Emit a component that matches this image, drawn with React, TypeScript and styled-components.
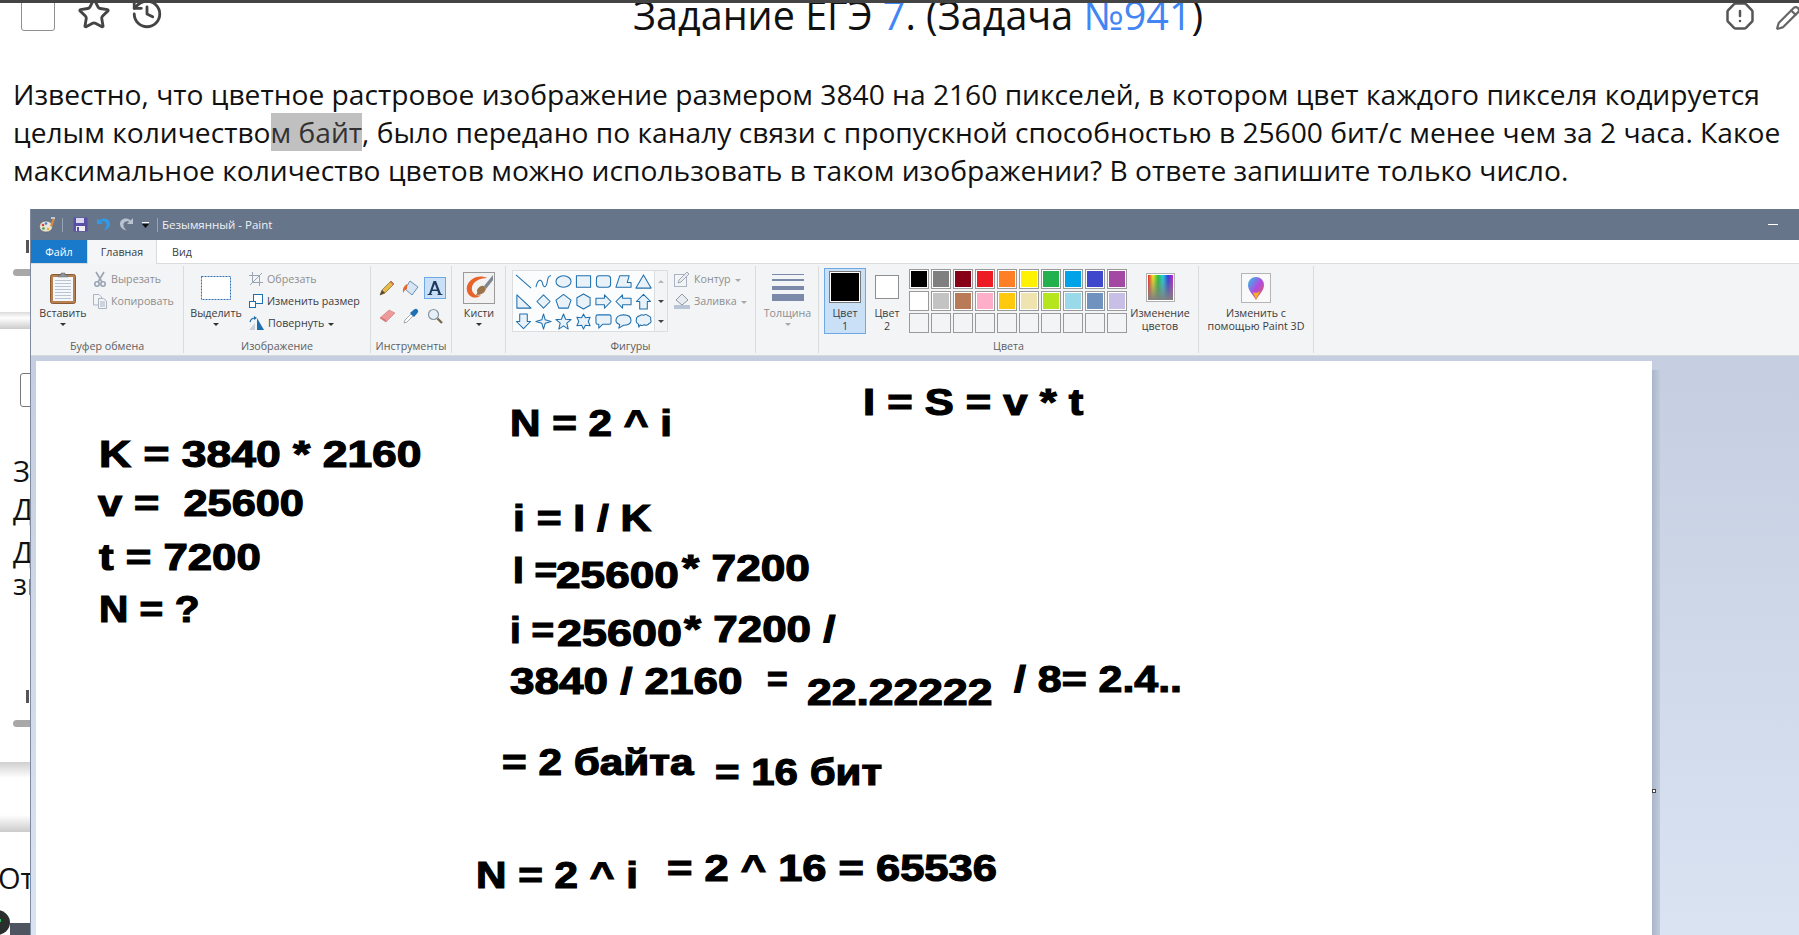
import { useLayoutEffect, useRef, type ReactNode } from 'react';
import { History, OctagonAlert, Pencil, Star } from 'lucide-react';
import styled, { createGlobalStyle } from 'styled-components';

const GlobalStyle = createGlobalStyle`
	html, body {
		margin: 0;
		padding: 0;
		background: #fff;
		overflow: hidden;
	}
`;

const Page = styled.div`
	position: relative;
	width: 1799px;
	height: 935px;
	overflow: hidden;
	background: #fff;
	font-family: 'Open Sans', 'Noto Sans', sans-serif;
	color: #111;
`;

const TopLine = styled.div`
	height: 3px;
	background: #444;
`;

const Header = styled.header`
	height: 33px;
	position: relative;
	display: flex;
	justify-content: space-between;
	align-items: flex-end;
	overflow: hidden;
	padding: 0 0 5px 21px;
	box-sizing: border-box;
`;

const HeaderIcons = styled.div`
	display: flex;
	align-items: flex-end;
	gap: 22px;
	svg + svg {
		margin-left: -3px;
	}
`;

const Checkbox = styled.div`
	width: 34px;
	height: 34px;
	margin-top: -8px;
	border: 1px solid #8f8f8f;
	border-radius: 3px;
	box-sizing: border-box;
`;

const Title = styled.h1`
	position: absolute;
	left: 633px;
	top: -13px;
	margin: 0;
	font-size: 39.5px;
	font-weight: 400;
	line-height: 50px;
	white-space: nowrap;
	color: #111;
	a {
		color: #4285f4;
	}
`;

const HeaderRight = styled.div`
	display: flex;
	align-items: flex-end;
	gap: 20px;
	margin-right: -2px;
`;

const Task = styled.p`
	margin: 39px 0 0;
	padding: 0 13px;
	width: 1775px;
	font-size: 28.18px;
	line-height: 38px;
	color: #111;
	mark {
		background: #c0c0c0;
		color: #333;
	}
`;

const Behind = styled.div`
	position: absolute;
	left: 0;
	top: 209px;
	width: 30px;
	height: 726px;
	overflow: hidden;
	display: flex;
	flex-direction: column;
`;

const Tick = styled.div<{ $mt: number }>`
	width: 3px;
	height: 13px;
	margin: ${(p) => p.$mt}px 0 0 26px;
	background: #555;
	flex: none;
`;

const SliderBar = styled.div<{ $mt: number }>`
	height: 7px;
	margin: ${(p) => p.$mt}px 0 0 13px;
	width: 30px;
	background: #a8a8a8;
	border-radius: 4px;
	flex: none;
`;

const Band = styled.div<{ $mt: number; $h: number; $fill: string }>`
	height: ${(p) => p.$h}px;
	margin-top: ${(p) => p.$mt}px;
	background: ${(p) => p.$fill};
	flex: none;
`;

const GhostBox = styled.div<{ $mt: number }>`
	width: 30px;
	height: 34px;
	margin: ${(p) => p.$mt}px 0 0 20px;
	border: 1px solid #777;
	border-radius: 3px;
	box-sizing: border-box;
	flex: none;
`;

const BehindLine = styled.div<{ $mt?: number; $ml: number }>`
	margin: ${(p) => p.$mt ?? 0}px 0 0 ${(p) => p.$ml}px;
	font-size: 29px;
	line-height: 38px;
	height: 38px;
	white-space: nowrap;
	flex: none;
`;

const FootRow = styled.div`
	margin-top: 10px;
	height: 28px;
	display: flex;
	align-items: flex-end;
	flex: none;
`;

const FootDot = styled.div`
	position: relative;
	width: 26px;
	height: 25px;
	margin-left: -16px;
	border-radius: 50%;
	background: #2a2f2d;
	flex: none;
	&::after {
		content: '';
		position: absolute;
		left: 16px;
		top: 9px;
		width: 1px;
		height: 3px;
		background: #23c25e;
	}
`;

const FootStrip = styled.div`
	flex: 1;
	height: 12px;
	background: #4e5560;
`;

const Window = styled.section`
	position: absolute;
	left: 30px;
	top: 209px;
	right: 0;
	bottom: 0;
	display: flex;
	flex-direction: column;
	border-left: 1px solid #7d8aa0;
	box-sizing: border-box;
	font-family: 'Open Sans', 'Noto Sans', sans-serif;
	font-size: 10.7px;
	color: #3c3c3c;
`;

const TitleBar = styled.div`
	height: 31px;
	background: #67758a;
	display: flex;
	align-items: center;
	padding-left: 8px;
	color: #eef1f4;
	font-size: 11.5px;
	flex: none;
`;

const TitleSep = styled.span<{ $l: number; $r: number }>`
	width: 1px;
	height: 14px;
	background: #97a2b2;
	margin: 0 ${(p) => p.$r}px 0 ${(p) => p.$l}px;
`;

const QuickGap = styled.span`
	width: 8px;
`;

const TitleText = styled.span`
	flex: 1;
`;

const Minimize = styled.span`
	width: 10px;
	height: 1px;
	background: #fff;
	margin-right: 21px;
`;

const Tabs = styled.nav`
	height: 23px;
	display: flex;
	background: #fff;
	border-bottom: 1px solid #dadbdc;
	box-sizing: content-box;
	flex: none;
`;

const Tab = styled.div<{ $w: number; $kind?: 'file' | 'active' }>`
	width: ${(p) => p.$w}px;
	height: ${(p) => (p.$kind === 'active' ? 24 : 23)}px;
	display: flex;
	align-items: center;
	justify-content: center;
	box-sizing: border-box;
	background: ${(p) => (p.$kind === 'file' ? '#1979ca' : p.$kind === 'active' ? '#f5f6f7' : '#fff')};
	color: ${(p) => (p.$kind === 'file' ? '#fff' : '#3c3c3c')};
	border-left: ${(p) => (p.$kind === 'active' ? '1px solid #dadbdc' : 'none')};
	border-right: ${(p) => (p.$kind === 'active' ? '1px solid #dadbdc' : 'none')};
`;

const Ribbon = styled.div`
	height: 92px;
	padding-top: 2px;
	box-sizing: border-box;
	background: #f3f4f6;
	border-bottom: 1px solid #d8d9db;
	display: flex;
	flex: none;
`;

const Group = styled.div<{ $w: number }>`
	width: ${(p) => p.$w}px;
	height: 87px;
	border-right: 1px solid #dadbdc;
	box-sizing: border-box;
	display: flex;
	flex-direction: column;
	flex: none;
`;

const GroupBody = styled.div<{ $pl?: number }>`
	flex: 1;
	display: flex;
	padding-left: ${(p) => p.$pl ?? 0}px;
	min-height: 0;
`;

const GroupLabel = styled.div`
	height: 14px;
	line-height: 14px;
	text-align: center;
	color: #5e5e5e;
	flex: none;
`;

const BigButton = styled.div<{ $w: number; $ml?: number }>`
	width: ${(p) => p.$w}px;
	margin-left: ${(p) => p.$ml ?? 0}px;
	display: flex;
	flex-direction: column;
	align-items: center;
	flex: none;
	padding-top: 5px;
	line-height: 13px;
	text-align: center;
	white-space: nowrap;
`;

const IconSlot = styled.div`
	height: 33px;
	display: flex;
	align-items: center;
	justify-content: center;
	margin-bottom: 3px;
	flex: none;
`;

const Caret = styled.span<{ $off?: boolean }>`
	width: 0;
	height: 0;
	margin-top: 3px;
	border-left: 3px solid transparent;
	border-right: 3px solid transparent;
	border-top: 3px solid ${(p) => (p.$off ? '#a8a8a8' : '#333')};
`;

const SmallStack = styled.div<{ $ml: number }>`
	margin-left: ${(p) => p.$ml}px;
	padding-top: 2px;
	display: flex;
	flex-direction: column;
	gap: 0;
`;

const SmallRow = styled.div<{ $off?: boolean }>`
	height: 22px;
	display: flex;
	align-items: center;
	gap: 4px;
	white-space: nowrap;
	color: ${(p) => (p.$off ? '#8e8e8e' : '#3c3c3c')};
`;

const ToolGrid = styled.div`
	display: grid;
	grid-template-columns: repeat(3, 24px);
	grid-auto-rows: 28px;
	margin: 11px 0 0 5px;
`;

const ToolCell = styled.div<{ $on?: boolean }>`
	width: 22px;
	height: 22px;
	display: flex;
	align-items: center;
	justify-content: center;
	box-sizing: border-box;
	border: 1px solid ${(p) => (p.$on ? '#6ea8e5' : 'transparent')};
	background: ${(p) => (p.$on ? '#c9e0f7' : 'transparent')};
`;

const Gallery = styled.div`
	width: 156px;
	height: 62px;
	margin: 4px 0 0 6px;
	display: flex;
	border: 1px solid #dcdddf;
	box-sizing: border-box;
	background: #fff;
	flex: none;
`;

const ShapeGrid = styled.div`
	width: 141px;
	display: grid;
	grid-template-columns: repeat(7, 20px);
	grid-auto-rows: 20px;
	background: #fbfcfd;
`;

const ShapeCell = styled.div`
	display: flex;
	align-items: center;
	justify-content: center;
`;

const Scroller = styled.div`
	flex: 1;
	display: flex;
	flex-direction: column;
	align-items: center;
	justify-content: space-around;
	background: #f3f4f6;
	border-left: 1px solid #dcdddf;
`;

const ScrollArrow = styled.span<{ $dir: 'up' | 'down' }>`
	width: 0;
	height: 0;
	border-left: 3px solid transparent;
	border-right: 3px solid transparent;
	border-top: ${(p) => (p.$dir === 'down' ? '3px solid #444' : 'none')};
	border-bottom: ${(p) => (p.$dir === 'up' ? '3px solid #b5b5b5' : 'none')};
`;

const ThicknessLines = styled.div`
	width: 32px;
	display: flex;
	flex-direction: column;
`;

const ThicknessLine = styled.span<{ $h: number; $mt: number }>`
	height: ${(p) => p.$h}px;
	margin-top: ${(p) => p.$mt}px;
	background: #7b8aa8;
`;

const OffText = styled.span`
	color: #8e8e8e;
`;

const ColorButton = styled.div<{ $on?: boolean; $w: number; $ml?: number }>`
	width: ${(p) => p.$w}px;
	height: 66px;
	margin: 2px 0 0 ${(p) => p.$ml ?? 0}px;
	box-sizing: border-box;
	border: 1px solid ${(p) => (p.$on ? '#6ea8e5' : 'transparent')};
	background: ${(p) => (p.$on ? '#c9e0f7' : 'transparent')};
	display: flex;
	flex-direction: column;
	align-items: center;
	line-height: 13px;
	text-align: center;
	flex: none;
`;

const ActiveSwatch = styled.div`
	width: 32px;
	height: 32px;
	margin: 2px 0 4px;
	box-sizing: border-box;
	border: 1px solid #777;
	padding: 1px;
	background: #fff;
	div {
		width: 100%;
		height: 100%;
		background: #000;
	}
`;

const SecondSwatch = styled.div`
	width: 24px;
	height: 24px;
	margin: 6px 0 8px;
	box-sizing: border-box;
	border: 1px solid #8f8f8f;
	background: #fff;
`;

const Palette = styled.div`
	display: grid;
	grid-template-columns: repeat(10, 20px);
	grid-auto-rows: 20px;
	gap: 2px;
	margin: 3px 0 0 1px;
	flex: none;
`;

const PaletteCell = styled.div<{ $c?: string }>`
	box-sizing: border-box;
	border: 1px solid #9a9a9a;
	padding: 1px;
	background: ${(p) => (p.$c ? '#fff' : '#f3f4f6')};
	div {
		width: 100%;
		height: 100%;
		background: ${(p) => p.$c ?? '#f3f4f6'};
	}
`;

const Workspace = styled.div`
	flex: 1;
	background: linear-gradient(#c5cee0, #d9e3f2);
	padding: 5px 0 0 5px;
	min-height: 0;
`;

const Canvas = styled.div`
	position: relative;
	width: 1616px;
	height: 700px;
	background: #fff;
	color: #000;
	font-family: 'Liberation Sans', Arial, sans-serif;
	&::after {
		content: '';
		position: absolute;
		left: 100%;
		top: 9px;
		width: 8px;
		bottom: 0;
		background: linear-gradient(90deg, #a9b5c9, #c1cbdc);
	}
`;

const Handle = styled.span`
	position: absolute;
	left: 1616px;
	top: 428px;
	width: 4px;
	height: 4px;
	box-sizing: border-box;
	border: 1px solid #444;
	background: #fff;
	z-index: 1;
`;

const Formula = styled.span<{ $x: number; $y: number }>`
	position: absolute;
	left: ${(p) => p.$x}px;
	top: ${(p) => p.$y - 30}px;
	font-size: 37px;
	line-height: 36px;
	font-weight: 700;
	white-space: pre;
	transform-origin: 0 0;
	-webkit-text-stroke: 1.2px #000;
`;

type FormulaItem = { text: string; x: number; y: number; w: number };

const formulas: FormulaItem[] = [
	{ text: 'K = 3840 * 2160', x: 63, y: 106, w: 322 },
	{ text: 'v =  25600', x: 62, y: 155, w: 206 },
	{ text: 't = 7200', x: 63, y: 209, w: 162 },
	{ text: 'N = ?', x: 63, y: 261, w: 101 },
	{ text: 'N = 2 ^ i', x: 474, y: 75, w: 162 },
	{ text: 'I = S = v * t', x: 827, y: 54, w: 220 },
	{ text: 'i = I / K', x: 477, y: 170, w: 138 },
	{ text: 'I =', x: 477, y: 222, w: 44 },
	{ text: '25600', x: 520, y: 227, w: 123 },
	{ text: '* 7200', x: 646, y: 220, w: 128 },
	{ text: 'i =', x: 474, y: 282, w: 44 },
	{ text: '25600', x: 521, y: 285, w: 125 },
	{ text: '* 7200 /', x: 648, y: 281, w: 152 },
	{ text: '3840 / 2160', x: 474, y: 333, w: 232 },
	{ text: '=', x: 731, y: 331, w: 21 },
	{ text: '22.22222', x: 771, y: 344, w: 185 },
	{ text: '/ 8= 2.4..', x: 978, y: 331, w: 168 },
	{ text: '= 2 байта', x: 466, y: 414, w: 192 },
	{ text: '= 16 бит', x: 679, y: 424, w: 167 },
	{ text: 'N = 2 ^ i', x: 440, y: 527, w: 162 },
	{ text: '= 2 ^ 16 = 65536', x: 631, y: 520, w: 330 },
];

const paletteColors = [
	'#000000', '#7f7f7f', '#880015', '#ed1c24', '#ff7f27', '#fff200', '#22b14c', '#00a2e8', '#3f48cc', '#a349a4',
	'#ffffff', '#c3c3c3', '#b97a57', '#ffaec9', '#ffc90e', '#efe4b0', '#b5e61d', '#99d9ea', '#7092be', '#c8bfe7',
	...Array(10).fill(undefined),
] as (string | undefined)[];

// each shape is drawn in an 18x18 box
const shapes: ReactNode[] = [
	<path d="M1 2 L17 16" />,
	<path d="M1 15 C3 6 7 6 8 11 S12 16 13 9 S16 3 17 3" fill="none" />,
	<ellipse cx="9" cy="9" rx="8" ry="6" />,
	<rect x="1.5" y="3" width="15" height="12" />,
	<rect x="1.5" y="3" width="15" height="12" rx="3" />,
	<path d="M5 3 H15 L13 10 L17 10 V15 H1 Z" />,
	<path d="M9 2 L17 16 H1 Z" />,
	<path d="M2 2 L17 16 H2 Z" />,
	<path d="M9 2 L16 9 L9 16 L2 9 Z" />,
	<path d="M9 1.5 L17 7.5 L14 16 H4 L1 7.5 Z" />,
	<path d="M9 1 L16 5 V13 L9 17 L2 13 V5 Z" />,
	<path d="M1 5.5 H10 V2 L17 9 L10 16 V12.5 H1 Z" />,
	<path d="M17 5.5 H8 V2 L1 9 L8 16 V12.5 H17 Z" />,
	<path d="M5 17 V9 H1.5 L9 1.5 L16.5 9 H13 V17 Z" />,
	<path d="M5 1 V9 H1.5 L9 16.5 L16.5 9 H13 V1 Z" />,
	<path d="M9 1 L10.8 7.2 L17 9 L10.8 10.8 L9 17 L7.2 10.8 L1 9 L7.2 7.2 Z" />,
	<path d="M9 1 L11.2 6.6 L17 7 L12.5 10.8 L14 17 L9 13.6 L4 17 L5.5 10.8 L1 7 L6.8 6.6 Z" />,
	<path d="M9 1 L11 5 L16 4.5 L14 9 L16 13.5 L11 13 L9 17 L7 13 L2 13.5 L4 9 L2 4.5 L7 5 Z" />,
	<path d="M3 2 H15 Q17 2 17 4 V10 Q17 12 15 12 H8 L4 16 V12 H3 Q1 12 1 10 V4 Q1 2 3 2 Z" />,
	<path d="M9 2 C14 2 17 4.5 17 8 C17 11 14 13 9 13 L4 16 L5 12.2 C2.5 11.4 1 10 1 8 C1 4.5 4 2 9 2 Z" />,
	<path d="M5 3 Q7 1 9 2.5 Q12 0.5 14 3 Q17.5 4 16.5 7 Q18 10 15 11 Q13 14 10 12.5 Q7 14 5.5 12.5 L4 15 L3.5 11.5 Q0.5 10 1.5 7 Q1 4 5 3 Z" />,
];

function ShapeIcon({ children }: { children: ReactNode }) {
	return (
		<svg width="17" height="17" viewBox="0 0 18 18" fill="#eaf2f9" stroke="#1f6fad" strokeWidth="1.1" strokeLinejoin="round">
			{children}
		</svg>
	);
}

function FormulaLine({ item }: { item: FormulaItem }) {
	const ref = useRef<HTMLSpanElement>(null);

	// stretch the text to the width it has in the picture: the Paint font is a wide black face
	useLayoutEffect(() => {
		if (ref.current) {
			ref.current.style.transform = `scaleX(${item.w / ref.current.offsetWidth})`;
		}
	}, [item.w]);

	return (
		<Formula ref={ref} $x={item.x} $y={item.y}>
			{item.text}
		</Formula>
	);
}

const PaintLogo = () => (
	<svg width="17" height="18" viewBox="0 0 17 18">
		<ellipse cx="7" cy="10.5" rx="6.5" ry="5.5" fill="#e8e4da" stroke="#5a5a5a" strokeWidth=".6" />
		<circle cx="4" cy="9" r="1.3" fill="#d9453a" />
		<circle cx="7" cy="7.5" r="1.3" fill="#3f7fd0" />
		<circle cx="4.5" cy="12.5" r="1.3" fill="#3da24a" />
		<circle cx="9" cy="13" r="1.3" fill="#e8b12c" />
		<path d="M11 10 L14 2 L16 3 L13 11 Z" fill="#d98a3a" />
		<rect x="12" y="1" width="4" height="2" fill="#c0c6d0" />
	</svg>
);

const Floppy = () => (
	<svg width="15" height="15" viewBox="0 0 15 15">
		<rect x="0.5" y="0.5" width="14" height="14" fill="#5a4fa8" />
		<rect x="3" y="1" width="8" height="5" fill="#d8d6ee" />
		<rect x="3" y="9" width="9" height="5" fill="#eee" />
		<rect x="4" y="10" width="2" height="4" fill="#5a4fa8" />
	</svg>
);

const UndoIcon = styled.svg<{ $flip?: boolean }>`
	transform: ${(p) => (p.$flip ? 'scaleX(-1)' : 'none')};
`;

const Undo = ({ flip, color }: { flip?: boolean; color: string }) => (
	<UndoIcon width="15" height="15" viewBox="0 0 15 15" $flip={flip}>
		<path d="M1 1 V7 H7 L4.8 4.8 C8 3.4 11 5.5 10.5 8.5 C10.2 10.5 9 12 7.5 13.5 C11.5 12.5 14 10 14 7 C14 2.5 8.5 -0.5 3.4 3.4 Z" fill={color} />
	</UndoIcon>
);

const QuickDrop = () => (
	<svg width="7" height="6" viewBox="0 0 7 6">
		<rect y="0" width="7" height="1" fill="#fff" />
		<path d="M0 2 H7 L3.5 6 Z" fill="#111" />
	</svg>
);

const Clipboard = () => (
	<svg width="26" height="32" viewBox="0 0 26 32">
		<rect x="0.5" y="2.5" width="25" height="29" rx="2" fill="#b9814f" stroke="#8a5c33" />
		<rect x="3" y="5" width="20" height="24" fill="#f6f7fa" />
		{[8, 11, 14, 17, 20, 23, 26].map((y) => (
			<rect key={y} x="5" y={y} width="16" height="1" fill="#b8c3d4" />
		))}
		<path d="M8 5 V3 H11 V1 H15 V3 H18 V5 Z" fill="#8e959f" stroke="#666" strokeWidth=".5" />
	</svg>
);

const Scissors = () => (
	<svg width="14" height="16" viewBox="0 0 14 16" fill="none" stroke="#9aa4b3" strokeWidth="1.6">
		<path d="M3 1 L9 11 M11 1 L5 11" />
		<circle cx="4" cy="13" r="2.2" />
		<circle cx="10" cy="13" r="2.2" />
	</svg>
);

const CopyIcon = () => (
	<svg width="14" height="15" viewBox="0 0 14 15" fill="#f3f4f6" stroke="#a9b3c2">
		<path d="M.5 .5 H6 L8.5 3 V11 H.5 Z" />
		<path d="M5.5 4.5 H10.5 L13.5 7 V14.5 H5.5 Z" />
		<path d="M7 8 H12 M7 10 H12 M7 12 H12" />
	</svg>
);

const CropIcon = () => (
	<svg width="14" height="14" viewBox="0 0 14 14" fill="none" stroke="#9aa4b3">
		<path d="M3.5 0 V10.5 H14 M0 3.5 H10.5 V14 M1 13 L13 1" />
	</svg>
);

const ResizeIcon = () => (
	<svg width="14" height="14" viewBox="0 0 14 14" fill="#fff" stroke="#1f6fad">
		<rect x="4.5" y="0.5" width="9" height="9" />
		<rect x="0.5" y="7.5" width="6" height="6" />
	</svg>
);

const RotateIcon = () => (
	<svg width="15" height="14" viewBox="0 0 15 14">
		<path d="M0 14 L6 7 V14 Z" fill="#ccd2da" />
		<path d="M8 14 V2 L15 14 Z" fill="#1f6fad" />
		<path d="M1 6 Q2 2 6 2" fill="none" stroke="#1f6fad" strokeWidth="1.2" />
		<path d="M5 0 L8 2 L5 4 Z" fill="#1f6fad" />
	</svg>
);

const PencilTool = () => (
	<svg width="16" height="16" viewBox="0 0 16 16">
		<path d="M1 15 L3 10 L12 1 L15 4 L6 13 Z" fill="#e8b84a" stroke="#7c6a3a" strokeWidth=".7" />
		<path d="M1 15 L3 10 L6 13 Z" fill="#5a4a30" />
		<path d="M11 2 L14 5 L15 4 L12 1 Z" fill="#c96a5a" />
	</svg>
);

const FillTool = () => (
	<svg width="18" height="18" viewBox="0 0 18 18">
		<path d="M8 2 L16 8 L10 16 L3 10 Z" fill="#d7e5f4" stroke="#6f8fb0" />
		<path d="M5 5 Q0 8 1 14 Q3 10 5 10 Z" fill="#e8642c" />
	</svg>
);

const TextTool = () => (
	<svg width="16" height="16" viewBox="0 0 16 16">
		<path d="M6.5 1 H9 L14 14 H15.5 V15 H10.5 V14 H11.5 L10.4 11 H5.2 L4 14 H5.2 V15 H.5 V14 H2 Z M5.7 9.6 H9.9 L7.8 4 Z" fill="#1f3a5f" fillRule="evenodd" />
	</svg>
);

const Eraser = () => (
	<svg width="17" height="14" viewBox="0 0 17 14">
		<path d="M1 9 L10 1 L16 4 L7 13 Z" fill="#ef9a9a" stroke="#c97a7a" strokeWidth=".6" />
		<path d="M1 9 L7 13 L7 11 L2 8 Z" fill="#d47777" />
	</svg>
);

const Picker = () => (
	<svg width="16" height="16" viewBox="0 0 16 16">
		<path d="M1 15 L2 12 L8 6 L10 8 L4 14 Z" fill="#fff" stroke="#888" strokeWidth=".7" />
		<path d="M7 5 L11 1.5 Q13 0 14.5 1.5 Q16 3 14.5 5 L11 9 Z" fill="#1f6fb5" />
	</svg>
);

const Magnifier = () => (
	<svg width="16" height="16" viewBox="0 0 16 16" fill="none">
		<circle cx="6.5" cy="6.5" r="5" fill="#e6f0fa" stroke="#8b94a0" strokeWidth="1.2" />
		<path d="M10.5 10.5 L15 15" stroke="#7b6a4f" strokeWidth="2.4" />
	</svg>
);

const Brush = () => (
	<svg width="32" height="32" viewBox="0 0 32 32">
		<rect x="0.5" y="0.5" width="31" height="31" fill="#f2f2f2" stroke="#9a9a9a" />
		<path d="M4 14 C8 4 18 3 24 6 C16 6 10 10 9 15 C8 21 13 25 18 23 C12 29 2 24 4 14 Z" fill="#e8632a" />
		<path d="M14 18 Q17 13 21 14 L23 17 Q21 23 13 23 Q15 21 14 18 Z" fill="#9a7448" />
		<path d="M21 14 L30 3 V8 L23 17 Z" fill="#7e8791" />
	</svg>
);

const OutlineIcon = () => (
	<svg width="16" height="16" viewBox="0 0 16 16" fill="none">
		<rect x="0.5" y="3.5" width="12" height="12" stroke="#a9b3c2" />
		<path d="M4 12 L5 9 L13 1 L15 3 L7 11 Z" fill="#e8ebef" stroke="#8e98a6" strokeWidth=".8" />
	</svg>
);

const FillIcon = () => (
	<svg width="16" height="16" viewBox="0 0 16 16">
		<rect x="0" y="12" width="16" height="4" fill="#b9c4d6" />
		<path d="M8 1 L14 7 L8 12 L2 7 Z" fill="#e8ebef" stroke="#8e98a6" />
	</svg>
);

const ColorEdit = () => (
	<svg width="29" height="29" viewBox="0 0 29 29">
		<defs>
			<linearGradient id="rainbow" x1="0" x2="1" y1="0" y2="0">
				<stop offset="0" stopColor="#f0202a" />
				<stop offset=".2" stopColor="#f7e81e" />
				<stop offset=".4" stopColor="#25c23c" />
				<stop offset=".6" stopColor="#23d0e6" />
				<stop offset=".8" stopColor="#2b3be0" />
				<stop offset="1" stopColor="#d020c8" />
			</linearGradient>
			<linearGradient id="fadeGray" x1="0" x2="0" y1="0" y2="1">
				<stop offset="0" stopColor="#808080" stopOpacity="0" />
				<stop offset="1" stopColor="#808080" />
			</linearGradient>
		</defs>
		<rect x="0.5" y="0.5" width="28" height="28" fill="#fff" stroke="#b0b0b0" />
		<rect x="2" y="2" width="25" height="25" fill="url(#rainbow)" />
		<rect x="2" y="2" width="25" height="25" fill="url(#fadeGray)" />
	</svg>
);

const Paint3D = () => (
	<svg width="30" height="30" viewBox="0 0 30 30">
		<defs>
			<linearGradient id="drop" x1="0" x2="1" y1="0" y2="1">
				<stop offset="0" stopColor="#25c8e8" />
				<stop offset=".5" stopColor="#b04be0" />
				<stop offset="1" stopColor="#f0603c" />
			</linearGradient>
		</defs>
		<rect x="0.5" y="0.5" width="29" height="29" fill="#f9f9f9" stroke="#b5b5b5" />
		<path d="M15 27 C12 21 7 18 7 12 A8 8 0 0 1 23 12 C23 18 18 21 15 27 Z" fill="url(#drop)" />
		<path d="M15 27 C14 23 12 21 12 19 C15 21 18 19 19 18 C18 21 16 23 15 27 Z" fill="#f5b21e" />
	</svg>
);

function App() {
	return (
		<Page>
			<GlobalStyle />
			<TopLine />
			<Header>
				<HeaderIcons>
					<Checkbox />
					<Star size={34} strokeWidth={2} color="#444" />
					<History size={34} strokeWidth={2} color="#444" />
				</HeaderIcons>
				<Title>
					Задание ЕГЭ <a>7</a>. (Задача <a>№941</a>)
				</Title>
				<HeaderRight>
					<OctagonAlert size={30} strokeWidth={2} color="#555" />
					<Pencil size={26} strokeWidth={2} color="#666" />
				</HeaderRight>
			</Header>
			<Task>
				Известно, что цветное растровое изображение размером 3840 на 2160 пикселей, в котором цвет каждого пикселя
				кодируется целым количество<mark>м байт</mark>, было передано по каналу связи с пропускной способностью в 25600
				бит/с менее чем за 2 часа. Какое максимальное количество цветов можно использовать в таком изображении? В ответе
				запишите только число.
			</Task>

			<Behind>
				<Tick $mt={31} />
				<SliderBar $mt={16} />
				<Band $mt={36} $h={17} $fill="linear-gradient(#dcdcdc, #fff 35%, #cbcbcb)" />
				<GhostBox $mt={44} />
				<BehindLine $mt={45} $ml={13}>З</BehindLine>
				<BehindLine $ml={13}>Д</BehindLine>
				<BehindLine $mt={5} $ml={13}>Д</BehindLine>
				<BehindLine $mt={-6} $ml={13}>зн</BehindLine>
				<Tick $mt={87} />
				<SliderBar $mt={17} />
				<Band $mt={35} $h={16} $fill="linear-gradient(#d0d0d0, #fff)" />
				<Band $mt={37} $h={17} $fill="linear-gradient(#fff, #cbcbcb)" />
				<BehindLine $mt={27} $ml={-2}>От</BehindLine>
				<FootRow>
					<FootDot />
					<FootStrip />
				</FootRow>
			</Behind>

			<Window>
				<TitleBar>
					<PaintLogo />
					<TitleSep $l={6} $r={10} />
					<Floppy />
					<QuickGap />
					<Undo color="#2f9be8" />
					<QuickGap />
					<Undo flip color="#b9c2ce" />
					<QuickGap />
					<QuickDrop />
					<TitleSep $l={8} $r={4} />
					<TitleText>Безымянный - Paint</TitleText>
					<Minimize />
				</TitleBar>
				<Tabs>
					<Tab $w={56} $kind="file">Файл</Tab>
					<Tab $w={70} $kind="active">Главная</Tab>
					<Tab $w={50}>Вид</Tab>
				</Tabs>
				<Ribbon>
					<Group $w={153}>
						<GroupBody>
							<BigButton $w={56} $ml={4}>
								<IconSlot><Clipboard /></IconSlot>
								Вставить
								<Caret />
							</BigButton>
							<SmallStack $ml={2}>
								<SmallRow $off><Scissors /> Вырезать</SmallRow>
								<SmallRow $off><CopyIcon /> Копировать</SmallRow>
							</SmallStack>
						</GroupBody>
						<GroupLabel>Буфер обмена</GroupLabel>
					</Group>
					<Group $w={187}>
						<GroupBody>
							<BigButton $w={58} $ml={3}>
								<IconSlot>
									<svg width="30" height="24" viewBox="0 0 30 24" fill="#fff">
										<rect x="0.5" y="0.5" width="29" height="23" stroke="#2a6fb0" strokeDasharray="2 1" />
									</svg>
								</IconSlot>
								Выделить
								<Caret />
							</BigButton>
							<SmallStack $ml={4}>
								<SmallRow $off><CropIcon /> Обрезать</SmallRow>
								<SmallRow><ResizeIcon /> Изменить размер</SmallRow>
								<SmallRow><RotateIcon /> Повернуть <Caret /></SmallRow>
							</SmallStack>
						</GroupBody>
						<GroupLabel>Изображение</GroupLabel>
					</Group>
					<Group $w={81}>
						<GroupBody>
							<ToolGrid>
								<ToolCell><PencilTool /></ToolCell>
								<ToolCell><FillTool /></ToolCell>
								<ToolCell $on><TextTool /></ToolCell>
								<ToolCell><Eraser /></ToolCell>
								<ToolCell><Picker /></ToolCell>
								<ToolCell><Magnifier /></ToolCell>
							</ToolGrid>
						</GroupBody>
						<GroupLabel>Инструменты</GroupLabel>
					</Group>
					<Group $w={54}>
						<GroupBody>
							<BigButton $w={54}>
								<IconSlot><Brush /></IconSlot>
								Кисти
								<Caret />
							</BigButton>
						</GroupBody>
						<GroupLabel />
					</Group>
					<Group $w={250}>
						<GroupBody>
							<Gallery>
								<ShapeGrid>
									{shapes.map((shape, i) => (
										<ShapeCell key={i}>
											<ShapeIcon>{shape}</ShapeIcon>
										</ShapeCell>
									))}
								</ShapeGrid>
								<Scroller>
									<ScrollArrow $dir="up" />
									<ScrollArrow $dir="down" />
									<ScrollArrow $dir="down" />
								</Scroller>
							</Gallery>
							<SmallStack $ml={6}>
								<SmallRow $off><OutlineIcon /> Контур <Caret $off /></SmallRow>
								<SmallRow $off><FillIcon /> Заливка <Caret $off /></SmallRow>
							</SmallStack>
						</GroupBody>
						<GroupLabel>Фигуры</GroupLabel>
					</Group>
					<Group $w={63}>
						<GroupBody>
							<BigButton $w={63}>
								<IconSlot>
									<ThicknessLines>
										<ThicknessLine $h={1} $mt={0} />
										<ThicknessLine $h={2} $mt={4} />
										<ThicknessLine $h={4} $mt={5} />
										<ThicknessLine $h={7} $mt={4} />
									</ThicknessLines>
								</IconSlot>
								<OffText>Толщина</OffText>
								<Caret $off />
							</BigButton>
						</GroupBody>
						<GroupLabel />
					</Group>
					<Group $w={380}>
						<GroupBody>
							<ColorButton $on $w={42} $ml={5}>
								<ActiveSwatch><div /></ActiveSwatch>
								Цвет
								<br />1
							</ColorButton>
							<ColorButton $w={42}>
								<SecondSwatch />
								Цвет
								<br />2
							</ColorButton>
							<Palette>
								{paletteColors.map((c, i) => (
									<PaletteCell key={i} $c={c}><div /></PaletteCell>
								))}
							</Palette>
							<BigButton $w={64} $ml={1}>
								<IconSlot><ColorEdit /></IconSlot>
								Изменение
								<br />
								цветов
							</BigButton>
						</GroupBody>
						<GroupLabel>Цвета</GroupLabel>
					</Group>
					<Group $w={115}>
						<GroupBody>
							<BigButton $w={114}>
								<IconSlot><Paint3D /></IconSlot>
								Изменить с
								<br />
								помощью Paint 3D
							</BigButton>
						</GroupBody>
					</Group>
				</Ribbon>
				<Workspace>
					<Canvas>
						{formulas.map((item, i) => (
							<FormulaLine key={i} item={item} />
						))}
						<Handle />
					</Canvas>
				</Workspace>
			</Window>
		</Page>
	);
}

export default App;
